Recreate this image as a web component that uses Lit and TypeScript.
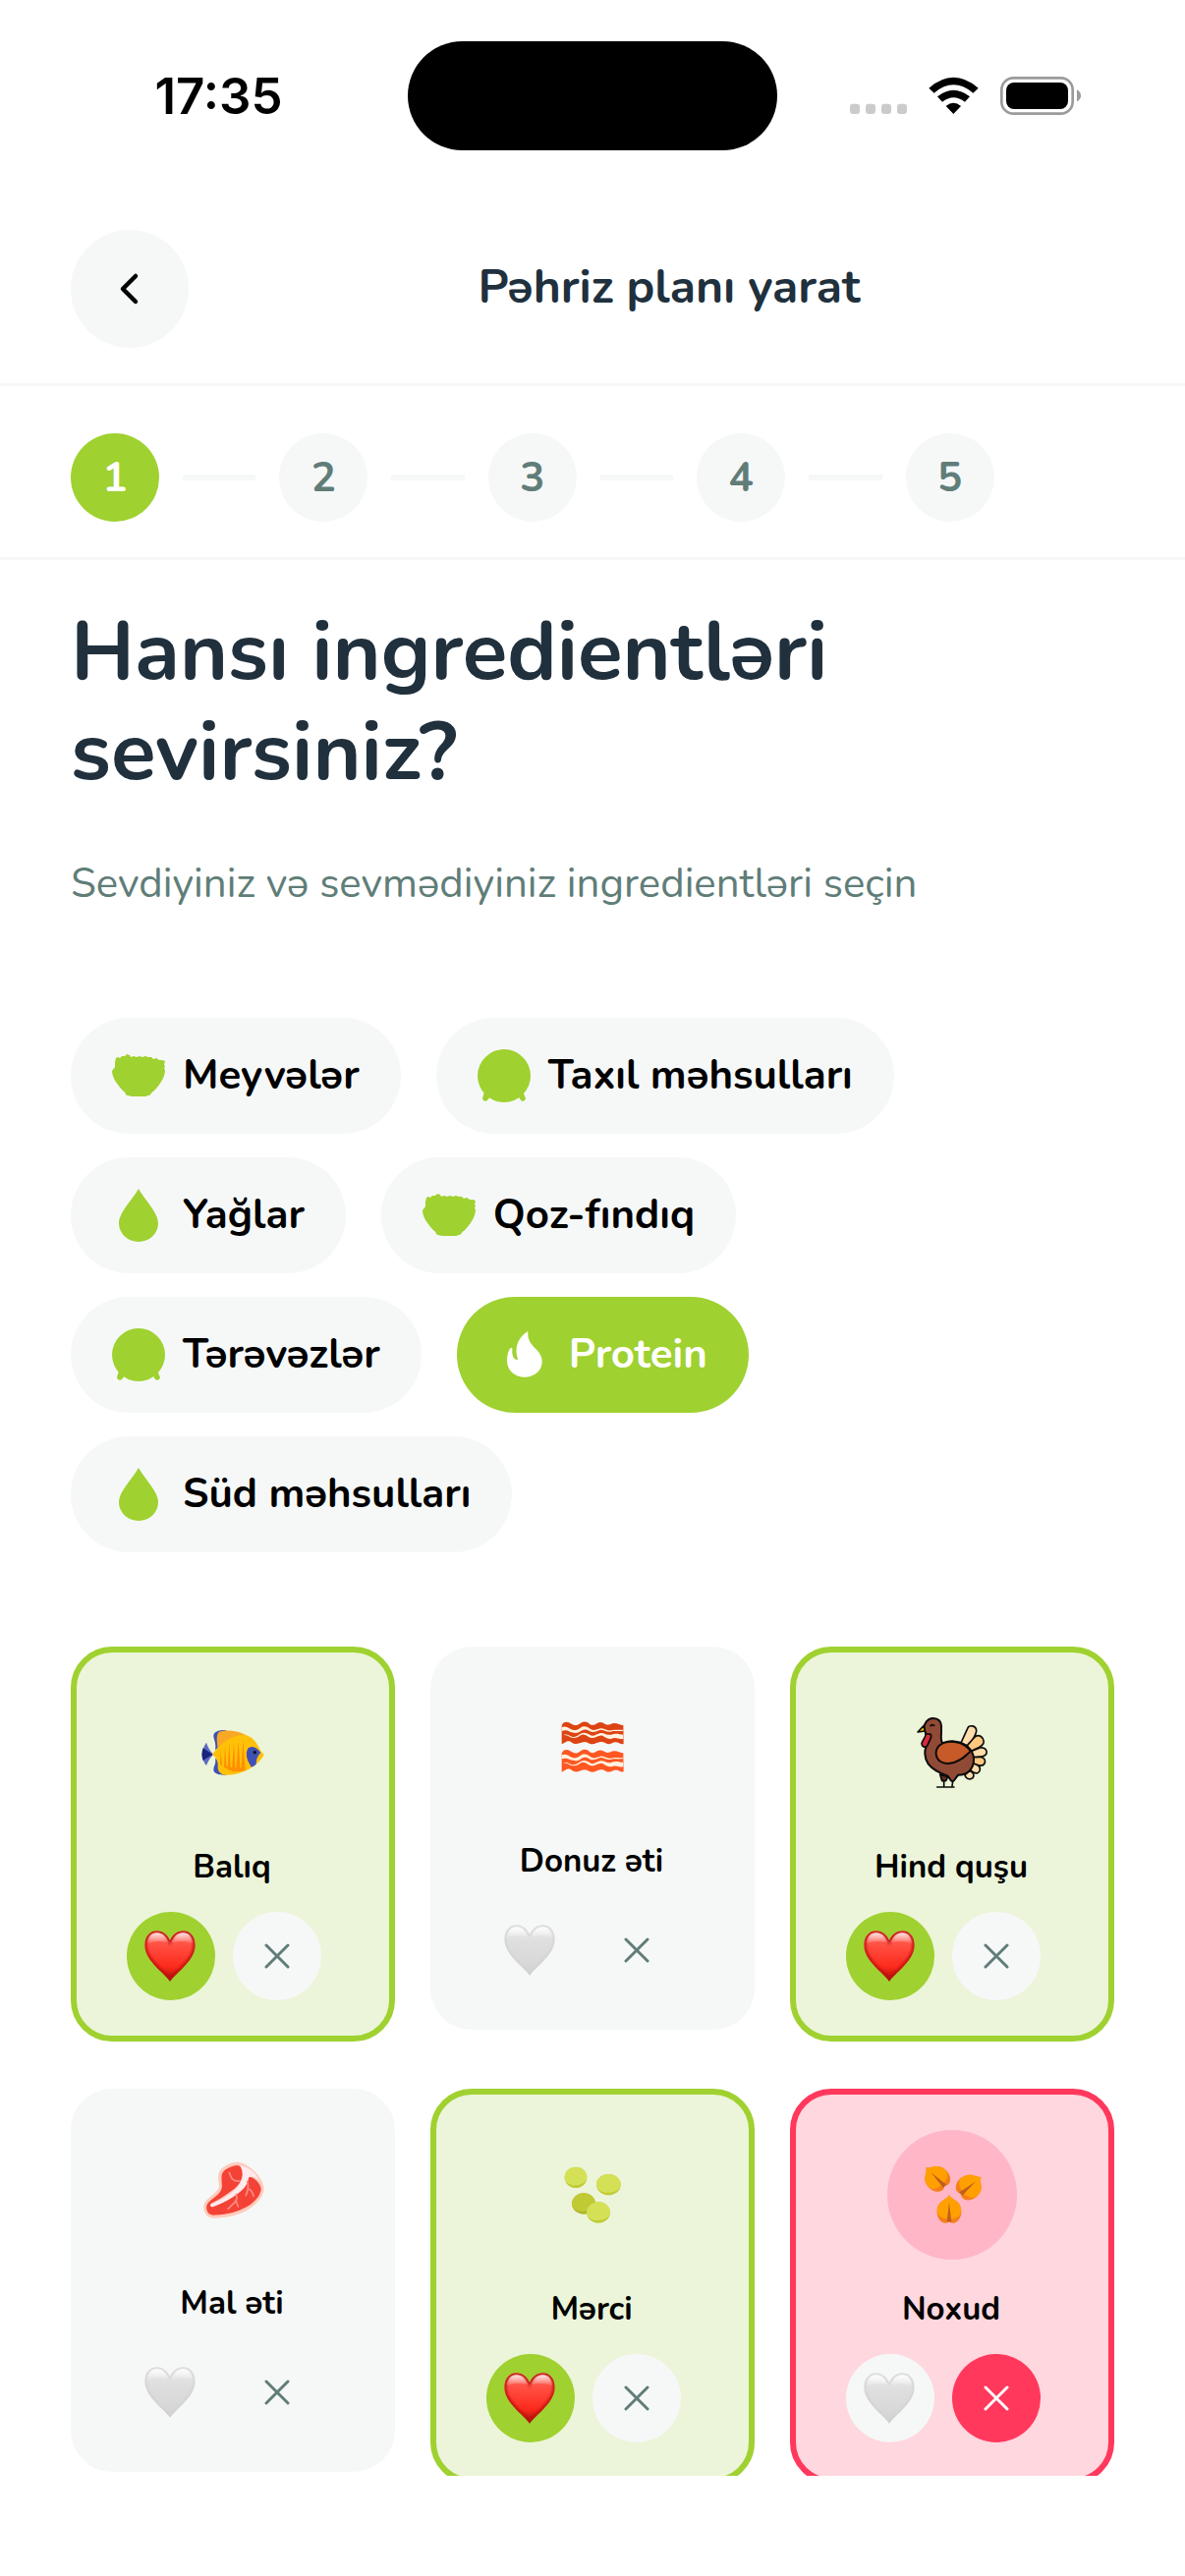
import { LitElement, html, css, svg } from "lit";
import { customElement, property, state } from "lit/decorators.js";
import { classMap } from "lit/directives/class-map.js";

type Choice = "like" | "dislike" | "none";

/* ---------- category icons (54px box) ---------- */

const bowlIcon = svg`
  <path d="M3 13 L4 9 L6 8 L8 9 L10 7 L13 7 L15 5 L18 6 L19 8 L22 7 L25 8 L28 7 L31 8 L34 7 L37 8 L40 8 L42 10 L45 9 L48 11 L51 11 L54 12 L53 16 L54 17 L53 20 L54 21 C54 29 48 37 42 43 C40 43 40 47 37 47 L34 48 H20 L16 47 C13 47 14 43 12 43 C6 37 0 29 0 22 L3 18 Z" />
`;
const plateIcon = svg`
  <circle cx="27" cy="27" r="27" />
  <path d="M7 43 L5 50 a3 3 0 0 0 5 2 L14 47 Z M46 43 L49 50 a3 3 0 0 1 -5 2 L41 47 Z" />
`;
const dropIcon = svg`
  <path d="M27 0 C33 11 47 24 47 35 A20 19 0 0 1 7 35 C7 24 21 11 27 0 Z" />
`;
const flameIcon = svg`
  <path d="M30.300 3 C29 20 44.700 20 44.700 34 C44.700 43 37 49.700 27 49.700 C17 49.700 9 43 9 33 C9 27 11 20 13.700 19.700 C15 20 14 23 14.500 26 C15 29 16.500 32 19.700 32.300 C20.500 31.500 18.500 28 18.500 23 C18.500 14 23.500 7 30.300 3 Z" />
`;

/* ---------- food pictures (396-unit box) ---------- */

const fishArt = svg`
  <g transform="translate(-333 -174)">
    <path fill="#5c6bc0" d="M450 341 C455 356 462 368 472 377 C462 387 455 398 450 411 C444 404 437 390 437 377 C437 364 444 350 450 341 Z" />
    <path fill="#1a237e" d="M440 358 Q454 368 470 377 Q454 386 440 396 Q433 377 440 358 Z" />
    <path fill="#3f51b5" d="M512 303 C488 302 472 308 472 320 C472 332 481 340 477 364 L492 352 L500 320 Z M512 440 C488 441 472 436 472 424 C472 412 481 406 477 390 L492 398 L500 424 Z" />
    <path fill="#f9a825" d="M484 358 C484 340 478 322 488 309 C498 302 545 300 580 323 L560 340 Z" />
    <path fill="#ffc107" d="M468 377 C495 340 530 317 562 318 C592 320 604 342 614 363 C618 371 626 374 625 380 C620 390 612 397 604 405 C580 425 550 440 510 440 C494 438 484 430 485 412 C486 394 478 386 468 377 Z" />
    <path fill="#ff8f00" d="M492 408 L494 362 L498 411 Z M504 416 L507 352 L512 421 Z M515 424 L520 346 L525 428 Z M528 430 L534 340 L539 430 Z M541 430 L548 337 L554 430 Z M556 428 L562 334 L569 425 Z" />
    <path fill="#ff8f00" d="M502 410 C520 428 545 431 568 426 L568 416 Q540 424 502 410 Z" />
    <path fill="#3f51b5" d="M616 372 C604 354 588 349 578 358 C568 374 572 394 588 416 Q596 413 602 407 C602 392 606 382 616 372 Z" />
    <circle cx="598" cy="371" r="5" fill="#111" />
  </g>
`;

const strip = (dy: number, meat: string) => svg`
  <g transform=${`translate(-351 ${dy - 156})`}>
    <path fill=${meat} d="M455 289 C460 276 470 276 480 281 C492 288 500 292 511 283 C521 275 532 276 540 284 C549 291 556 286 565 281 C573 277 581 280 588 285 C597 290 604 283 615 282 C624 281 634 288 643 288 L644 345 C634 348 628 338 617 340 C606 343 601 349 589 343 C578 336 570 339 560 343 C549 348 543 346 534 341 C525 336 518 340 509 343 C498 348 490 344 482 338 C472 333 464 342 455 346 Z" />
    <path fill="#fff3e0" d="M455 294 C466 290 474 294 482 300 C493 306 503 303 512 296 C523 288 534 292 543 300 C553 307 562 301 573 298 C583 296 592 306 604 304 C616 300 630 304 643 302 V305 C630 308 616 304 604 308 C592 310 582 301 573 302 C562 306 552 312 541 307 C532 300 523 299 512 307 C502 314 492 312 480 308 C470 303 464 303 455 306 Z" />
    <path fill="#fff3e0" d="M457 319 C466 315 474 317 482 322 C494 327 503 320 512 314 C523 308 534 312 543 319 C553 324 562 314 573 312 C584 310 594 320 606 317 C618 311 632 316 643 317 V330 C632 332 622 325 612 328 C600 333 590 326 580 320 C568 316 558 329 545 327 C534 324 526 312 514 318 C503 326 494 329 481 325 C473 320 466 317 457 319 Z" />
  </g>
`;
const baconArt = svg`${strip(0, "#dd4414")}${strip(85, "#ff5722")}`;

const turkeyArt = svg`
  <g transform="translate(-339 -174)" stroke-linecap="round" stroke-linejoin="round">
    <g stroke="#0b0b0b" stroke-width="5" fill="#ffdcaa">
      <path d="M564 342 L584 298 C588 286 610 288 611 304 C612 312 606 322 596 338 L584 352 Z" />
      <path fill="#ffc880" d="M583 350 L606 324 C620 314 636 326 633 342 C630 354 616 356 594 368 Z" />
      <path d="M594 368 L622 357 C636 354 644 364 642 373 C640 384 624 385 602 386 Z" />
      <path fill="#ffc880" d="M602 386 L622 385 C636 384 640 398 636 405 C630 416 612 410 600 404 Z" />
      <path d="M600 404 C612 408 624 412 622 424 C619 438 602 438 592 424 Z" />
      <path d="M590 428 C602 430 606 442 600 449 C592 456 578 452 576 440 Z" />
    </g>
    <path fill="#5d2f22" stroke="#0b0b0b" stroke-width="5" d="M500 438 L506 458 H518 L524 446 Z" />
    <path fill="#914a35" stroke="#0b0b0b" stroke-width="6" d="M504 296 C506 276 494 266 478 267 C462 268 450 282 452 300 C456 316 468 330 462 346 C450 362 452 388 464 406 C478 424 504 436 522 442 C530 446 530 458 538 460 C546 458 548 446 556 440 C580 440 604 424 603 392 C603 372 594 362 580 350 C556 334 528 334 510 344 C500 338 504 320 504 310 Z" />
    <path fill="#c65a28" stroke="#0b0b0b" stroke-width="6" d="M594 367 C574 342 548 336 524 339 C500 342 486 358 488 376 C490 396 508 408 530 404 C556 402 574 384 594 367 Z" />
    <path fill="#f5c40a" stroke="#0b0b0b" stroke-width="5" d="M450 290 L432 309 L454 306 Z" />
    <path fill="#dc2a3c" stroke="#0b0b0b" stroke-width="5" d="M456 314 C458 326 446 332 444 344 C446 358 460 358 464 344 C468 334 476 328 472 316 Z" />
    <path fill="none" stroke="#0b0b0b" stroke-width="5" d="M471 290 Q476 284 482 289 M569 390 L580 380 M512 458 V474 M539 460 L537 474 M491 477 H543" />
  </g>
`;

const steakArt = svg`
  <g transform="translate(-333 -156)">
    <path fill="#ffccbc" d="M545 272 C575 272 624 318 626 352 C626 382 596 408 566 424 C536 438 500 444 468 443 C448 440 440 424 442 404 C450 378 488 366 489 346 C488 330 482 316 490 300 C500 284 522 273 545 272 Z" />
    <path fill="#f44336" d="M545 282 C558 284 564 292 562 306 C560 326 548 346 530 358 C510 374 486 388 464 399 C460 404 464 410 470 408 C500 398 536 380 556 358 C568 344 574 330 576 318 C590 312 616 336 617 354 C616 376 592 402 562 414 C534 428 500 434 470 434 C452 432 448 414 452 402 C462 384 496 374 498 346 C497 330 494 318 500 304 C510 290 528 284 545 282 Z" />
    <path fill="#ffebee" d="M552 282 C578 286 604 308 612 330 C604 318 590 314 580 318 C576 340 566 352 552 364 C526 384 496 400 470 409 C462 410 460 402 466 400 C496 388 524 372 542 352 C558 334 568 308 552 282 Z" />
    <g fill="none" stroke="#ff8a80" stroke-width="5" stroke-linecap="round">
      <path d="M520 304 C526 318 526 332 552 330" />
      <path d="M541 370 C546 384 542 392 533 399 L516 415 M541 392 L547 408" />
      <path d="M575 332 C580 344 578 356 571 374 M579 354 C588 358 592 366 594 376" />
    </g>
  </g>
`;

const lentil = (cx: number, cy: number, rx: number, ry: number, top: string, low: string) => svg`
  <ellipse cx=${cx} cy=${cy} rx=${rx} ry=${ry} fill=${low} />
  <path
    fill=${top}
    d=${`M${cx - rx} ${cy} A${rx} ${ry} 0 0 1 ${cx + rx} ${cy} C${cx + rx} ${cy + ry * 0.5} ${cx + rx * 0.4} ${cy + ry * 0.75} ${cx} ${cy + ry * 0.75} C${cx - rx * 0.5} ${cy + ry * 0.8} ${cx - rx} ${cy + ry * 0.5} ${cx - rx} ${cy} Z`}
  />
`;
const lentilArt = svg`
  <g transform="translate(-351 -174)">
    ${lentil(498, 319, 34, 32, "#d4e157", "#c0ca33")}
    ${lentil(598, 341, 37, 32, "#d4e157", "#c0ca33")}
    ${lentil(522, 399, 36, 32, "#c0ca33", "#afb42b")}
    ${lentil(567, 426, 36, 32, "#d4e157", "#c0ca33")}
  </g>
`;

const pea = (x: number, y: number, angle: number) => svg`
  <g transform=${`translate(${x} ${y}) rotate(${angle})`}>
    <path fill="#f57f17" d="M0 -48 C5 -38 14 -36 24 -28 C34 -20 38 -6 37 6 C36 22 26 36 14 37 C8 38 4 34 0 34 C-4 34 -8 38 -14 37 C-26 36 -36 22 -37 6 C-38 -6 -34 -20 -24 -28 C-14 -36 -5 -38 0 -48 Z" />
    <path fill="#ffa000" d="M0 -48 C5 -38 14 -36 24 -28 C34 -20 38 -6 36 4 C32 22 12 24 0 24 C-12 24 -32 22 -36 4 C-38 -6 -34 -20 -24 -28 C-14 -36 -5 -38 0 -48 Z" />
    <path fill="#bf5f1e" d="M0 -26 L7 34 Q0 31 -7 34 Z" />
  </g>
`;
const chickpeaArt = svg`
  <g transform="translate(-339 -174)">
    ${pea(491, 322, -45)} ${pea(589, 348, 50)} ${pea(528, 421, 0)}
  </g>
`;

/* ---------- heart ---------- */

const HEART =
  "M78 31 C70 12 55 1 38 1 C16 1 1 20 1 45 C1 76 28 104 52 127 C62 137 71 146 78 155 C85 146 94 137 104 127 C128 104 155 76 155 45 C155 20 140 1 118 1 C101 1 86 12 78 31 Z";

const heart = (filled: boolean) => svg`
  <svg class="heart" viewBox="0 0 156 156" aria-hidden="true">
    <defs>
      <linearGradient id="base" x1="0" y1="0" x2="0" y2="1">
        <stop offset="0" stop-color=${filled ? "#ff6a5e" : "#ececec"} />
        <stop offset="0.35" stop-color=${filled ? "#ff4a3d" : "#dedede"} />
        <stop offset="0.72" stop-color=${filled ? "#fb2a1c" : "#d9d9d9"} />
        <stop offset="1" stop-color=${filled ? "#a00c06" : "#d2d2d2"} />
      </linearGradient>
      <linearGradient id="shine" x1="0" y1="0" x2="0" y2="1">
        <stop offset="0" stop-color="#fff" stop-opacity=${filled ? 0.85 : 0.95} />
        <stop offset="1" stop-color="#fff" stop-opacity="0" />
      </linearGradient>
      <clipPath id="shape"><path d=${HEART} /></clipPath>
      <filter id="soft"><feGaussianBlur stdDeviation="4" /></filter>
    </defs>
    <path d=${HEART} fill="url(#base)" />
    <g clip-path="url(#shape)">
      <path d=${HEART} fill="none" stroke=${filled ? "#b80f0a" : "#cfcfcf"} stroke-width=${filled ? 11 : 7} filter="url(#soft)" />
      <path d="M8 42 C10 18 22 7 38 7 C54 7 66 17 75 40 C58 30 26 30 8 42 Z" fill="url(#shine)" />
      <path d="M148 42 C146 18 134 7 118 7 C102 7 90 17 81 40 C98 30 130 30 148 42 Z" fill="url(#shine)" />
    </g>
  </svg>
`;

@customElement("ingredient-card")
export class IngredientCard extends LitElement {
  @property() name = "";
  @property() choice: Choice = "none";
  @property({ attribute: false }) art: unknown;

  static styles = css`
    :host {
      display: block;
    }
    .card {
      box-sizing: border-box;
      display: flex;
      flex-direction: column;
      align-items: center;
      padding: 36px 24px;
      border-radius: 42px;
      background: #f6f8f8;
    }
    .card.like {
      border: 6px solid #9fd130;
      background: #ecf5d9;
    }
    .card.dislike {
      border: 6px solid #ff385c;
      background: #ffd7de;
    }
    .picture {
      width: 132px;
      height: 132px;
      border-radius: 50%;
    }
    .dislike .picture {
      background: #ffb6c6;
    }
    .picture svg {
      display: block;
      width: 100%;
      height: 100%;
    }
    .name {
      margin: 27px 0 21px;
      padding-right: 2px;
      font-size: 33px;
      line-height: 48px;
      font-weight: 700;
      color: #000;
      white-space: nowrap;
    }
    .actions {
      display: flex;
    }
    button {
      display: grid;
      place-items: center;
      width: 90px;
      height: 90px;
      margin: 0 18px 0 0;
      padding: 0;
      border: 0;
      border-radius: 50%;
      background: #f6f8f8;
      color: #607d78;
      cursor: pointer;
    }
    .like .yes {
      background: #9fd130;
    }
    .dislike .no {
      background: #ff385c;
      color: #fff;
    }
    .heart {
      width: 52px;
      height: 52px;
      padding-right: 2px;
    }
    .cross {
      width: 26px;
      height: 26px;
    }
  `;

  private choose(next: Choice) {
    this.choice = this.choice === next ? "none" : next;
  }

  render() {
    return html`
      <article class="card ${this.choice}">
        <div class="picture">
          <svg viewBox="0 0 396 396" role="img" aria-label=${this.name}>${this.art}</svg>
        </div>
        <div class="name">${this.name}</div>
        <div class="actions">
          <button
            class="yes"
            aria-label="Sevirəm"
            aria-pressed=${this.choice === "like"}
            @click=${() => this.choose("like")}
          >
            ${heart(this.choice === "like")}
          </button>
          <button
            class="no"
            aria-label="Sevmirəm"
            aria-pressed=${this.choice === "dislike"}
            @click=${() => this.choose("dislike")}
          >
            <svg class="cross" viewBox="0 0 26 26" aria-hidden="true">
              <path d="M2 2 L24 24 M24 2 L2 24" fill="none" stroke="currentColor" stroke-width="3" stroke-linecap="round" />
            </svg>
          </button>
        </div>
      </article>
    `;
  }
}

@customElement("app-root")
export class AppRoot extends LitElement {
  @state() private category = "Protein";

  private steps = [1, 2, 3, 4, 5];

  private categories = [
    { name: "Meyvələr", icon: bowlIcon },
    { name: "Taxıl məhsulları", icon: plateIcon },
    { name: "Yağlar", icon: dropIcon },
    { name: "Qoz-fındıq", icon: bowlIcon },
    { name: "Tərəvəzlər", icon: plateIcon },
    { name: "Protein", icon: flameIcon },
    { name: "Süd məhsulları", icon: dropIcon },
  ];

  private ingredients: { name: string; choice: Choice; art: unknown }[] = [
    { name: "Balıq", choice: "like", art: fishArt },
    { name: "Donuz əti", choice: "none", art: baconArt },
    { name: "Hind quşu", choice: "like", art: turkeyArt },
    { name: "Mal əti", choice: "none", art: steakArt },
    { name: "Mərci", choice: "like", art: lentilArt },
    { name: "Noxud", choice: "dislike", art: chickpeaArt },
  ];

  static styles = css`
    :host {
      display: flex;
      flex-direction: column;
      box-sizing: border-box;
      height: 100vh;
      padding-bottom: 102px;
      overflow: hidden;
      background: #fff;
      color: #000;
      font-family: Nunito, Lato, "Open Sans", sans-serif;
    }
    button {
      font: inherit;
      border: 0;
      cursor: pointer;
    }
    .status {
      flex: none;
      display: grid;
      grid-template-columns: 1fr auto 1fr;
      align-items: center;
      justify-items: center;
      box-sizing: border-box;
      height: 177px;
      padding: 18px 0 0;
    }
    .clock {
      padding-left: 30px;
      font: 600 51px/60px Inter, sans-serif;
    }
    .island {
      width: 376px;
      height: 111px;
      border-radius: 56px;
      background: #000;
    }
    .signals {
      width: 236px;
      height: 42px;
      padding-right: 32px;
    }
    .header {
      flex: none;
      display: flex;
      align-items: center;
      gap: 36px;
      padding: 57px 72px 36px;
      border-bottom: 3px solid #f6f8f8;
    }
    .back {
      flex: none;
      display: grid;
      place-items: center;
      width: 120px;
      height: 120px;
      padding: 0;
      border-radius: 50%;
      background: #f6f8f8;
      color: #000;
    }
    .back svg {
      width: 54px;
      height: 54px;
    }
    .title {
      flex: 1;
      margin: 0;
      padding-bottom: 4px;
      text-align: center;
      font-size: 48px;
      line-height: 66px;
      font-weight: 700;
      color: #20303d;
    }
    .steps {
      flex: none;
      display: grid;
      grid-template-columns: repeat(5, 1fr);
      margin: 0;
      padding: 48px 72px 36px;
      list-style: none;
      border-bottom: 3px solid #f6f8f8;
    }
    .step {
      display: flex;
      align-items: center;
      gap: 24px;
      padding-right: 24px;
    }
    .dot {
      box-sizing: border-box;
      display: grid;
      place-items: center;
      width: 90px;
      height: 90px;
      padding-top: 2px;
      border-radius: 50%;
      background: #f6f8f8;
      color: #607d78;
      font-size: 42px;
      font-weight: 700;
      line-height: 58px;
    }
    .step.current .dot {
      background: #9fd130;
      color: #fff;
    }
    .step:not(:last-child)::after {
      content: "";
      flex: 1;
      height: 6px;
      background: #f6f8f8;
    }
    .content {
      flex: 1;
      min-height: 0;
      overflow-y: auto;
      scrollbar-width: none;
      padding: 43px 72px 0;
    }
    .question {
      margin: 0;
      font-size: 84px;
      line-height: 102px;
      font-weight: 700;
      color: #20303d;
    }
    .hint {
      margin: 53px 0 106px;
      font-size: 42px;
      line-height: 60px;
      color: #607d78;
    }
    .chips {
      display: flex;
      flex-wrap: wrap;
      gap: 24px 36px;
      padding-right: 48px;
    }
    .chip {
      display: flex;
      align-items: center;
      gap: 18px;
      padding: 30px 42px;
      border-radius: 60px;
      background: #f6f8f8;
      color: #000;
      font-size: 42px;
      line-height: 58px;
      font-weight: 700;
      white-space: nowrap;
    }
    .chip svg {
      width: 54px;
      height: 54px;
      fill: #9fd130;
    }
    .chip.active {
      background: #9fd130;
      color: #fff;
    }
    .chip.active svg {
      fill: #fff;
    }
    .cards {
      display: grid;
      grid-template-columns: repeat(3, 1fr);
      align-items: start;
      gap: 48px 36px;
      margin-top: 96px;
      padding-bottom: 48px;
    }
  `;

  render() {
    return html`
      <div class="status">
        <span class="clock">17:35</span>
        <span class="island"></span>
        <svg class="signals" viewBox="45 51 708 126" aria-hidden="true">
          <g fill="#cbcbcb">
            ${[45, 93, 141, 189].map((x) => svg`<rect x=${x} y="137" width="30" height="31" rx="9" />`)}
          </g>
          <path d="M286 89 Q361 24 437 89 L421 104 Q361 54 302 104 Z" />
          <path d="M312 115 Q361 76 411 115 L396 131 Q361 104 327 131 Z" />
          <path d="M338 144 Q361 124 384 144 L361 168 Z" />
          <rect x="508" y="58" width="217" height="109" rx="36" fill="none" stroke="#9b9b9b" stroke-width="8" />
          <rect x="522" y="72" width="189" height="81" rx="24" />
          <path fill="#9b9b9b" d="M738 94 Q750 100 750 112 Q750 124 738 130 Z" />
        </svg>
      </div>

      <header class="header">
        <button class="back" aria-label="Geri">
          <svg viewBox="0 0 54 54" aria-hidden="true">
            <path d="M33 14 L20 27 L33 40" fill="none" stroke="currentColor" stroke-width="4.500" stroke-linecap="round" stroke-linejoin="round" />
          </svg>
        </button>
        <h2 class="title">Pəhriz planı yarat</h2>
      </header>

      <ol class="steps">
        ${this.steps.map(
          (n) => html`
            <li class=${classMap({ step: true, current: n === 1 })}><span class="dot">${n}</span></li>
          `
        )}
      </ol>

      <main class="content">
        <h1 class="question">Hansı ingredientləri sevirsiniz?</h1>
        <p class="hint">Sevdiyiniz və sevmədiyiniz ingredientləri seçin</p>

        <div class="chips">
          ${this.categories.map(
            (c) => html`
              <button
                class=${classMap({ chip: true, active: c.name === this.category })}
                aria-pressed=${c.name === this.category}
                @click=${() => (this.category = c.name)}
              >
                <svg viewBox="0 0 54 54" aria-hidden="true">${c.icon}</svg>
                ${c.name}
              </button>
            `
          )}
        </div>

        <section class="cards">
          ${this.ingredients.map(
            (i) => html`
              <ingredient-card .name=${i.name} .choice=${i.choice} .art=${i.art}></ingredient-card>
            `
          )}
        </section>
      </main>
    `;
  }
}
